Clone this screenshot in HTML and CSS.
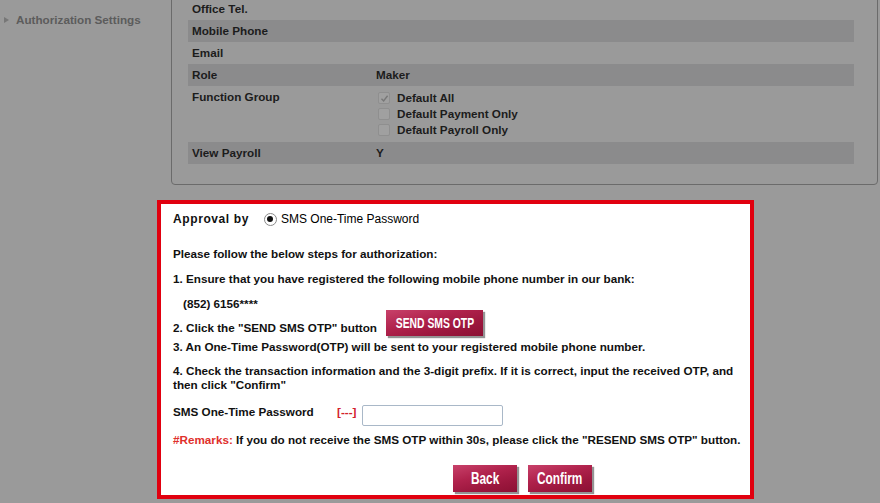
FILE: index.html
```html
<!DOCTYPE html>
<html lang="en">
<head>
<meta charset="utf-8">
<title>Authorization</title>
<link rel="stylesheet" href="styles.css">
</head>
<body>
<div class="page">
  <aside class="sidebar">
    <div class="nav-item"><span class="tri"></span>Authorization Settings</div>
  </aside>
  <main class="main">
    <section class="panel">
      <div class="row"><div class="label">Office Tel.</div><div class="value"></div></div>
      <div class="row alt"><div class="label">Mobile Phone</div><div class="value"></div></div>
      <div class="row"><div class="label">Email</div><div class="value"></div></div>
      <div class="row alt"><div class="label">Role</div><div class="value">Maker</div></div>
      <div class="row fg">
        <div class="label">Function Group</div>
        <div class="value list">
          <div class="opt"><span class="cb"><svg width="9" height="9" viewBox="0 0 9 9"><path d="M1.5 4.8 L3.6 6.9 L7.6 1.8" fill="none" stroke="#777" stroke-width="1.4"/></svg></span>Default All</div>
          <div class="opt"><span class="cb"></span>Default Payment Only</div>
          <div class="opt"><span class="cb"></span>Default Payroll Only</div>
        </div>
      </div>
      <div class="row alt"><div class="label">View Payroll</div><div class="value">Y</div></div>
    </section>

    <section class="approval">
      <div class="approve-by">
        <span class="title">Approval by</span>
        <span class="radio"><span class="dot"></span></span>
        <span class="radio-label">SMS One-Time Password</span>
      </div>
      <div class="intro">Please follow the below steps for authorization:</div>
      <div class="step">1. Ensure that you have registered the following mobile phone number in our bank:</div>
      <div class="phone">(852) 6156****</div>
      <div class="step2">
        <span class="step2-text">2. Click the "SEND SMS OTP" button</span>
        <button class="btn btn-send" type="button"><span>SEND SMS OTP</span></button>
      </div>
      <div class="step3">3. An One-Time Password(OTP) will be sent to your registered mobile phone number.</div>
      <div class="step4">4. Check the transaction information and the 3-digit prefix. If it is correct, input the received OTP, and then click "Confirm"</div>
      <div class="otp-row">
        <span class="otp-label">SMS One-Time Password</span>
        <span class="otp-code">[---]</span>
        <input class="otp-input" type="text">
      </div>
      <div class="remarks"><span class="red">#Remarks:</span> If you do not receive the SMS OTP within 30s, please click the "RESEND SMS OTP" button.</div>
      <div class="actions">
        <button class="btn btn-action" type="button"><span>Back</span></button>
        <button class="btn btn-action" type="button"><span>Confirm</span></button>
      </div>
    </section>
  </main>
</div>
</body>
</html>
```

FILE: styles.css
```css
html, body {
  margin: 0;
  padding: 0;
  background: #9a9a9a;
  height: 100%;
  overflow: hidden;
}
body {
  font-family: "Liberation Sans", Arial, sans-serif;
  font-size: 11.7px;
  font-weight: bold;
  color: #1e1e1e;
}
.page {
  display: flex;
  align-items: flex-start;
}
.sidebar {
  width: 157px;
  flex: none;
}
.nav-item {
  display: flex;
  align-items: center;
  margin-top: 13px;
  padding-left: 4px;
  line-height: 14px;
  color: #5c5c5c;
  white-space: nowrap;
}
.tri {
  width: 0;
  height: 0;
  border-left: 5px solid #777;
  border-top: 3.5px solid transparent;
  border-bottom: 3.5px solid transparent;
  margin-right: 7px;
}
.main {
  flex: 1;
  display: flex;
  flex-direction: column;
}
.panel {
  margin: -30px 2px 0 14px;
  border: 1px solid #6b6b6b;
  border-radius: 0 0 4px 4px;
  padding: 27px 23px 20px 16px;
  background: #9a9a9a;
}
.row {
  display: flex;
  height: 22px;
  line-height: 22px;
  color: #1c1c1c;
}
.row.alt {
  background: #8b8b8c;
}
.label {
  width: 188px;
  padding-left: 4px;
  box-sizing: border-box;
  flex: none;
}
.value {
  flex: 1;
}
.row.fg {
  height: 56px;
}
.list {
  padding: 4px 0;
  line-height: 16px;
}
.opt {
  display: flex;
  align-items: center;
  height: 16px;
}
.cb {
  width: 10px;
  height: 10px;
  border: 1px solid #8f8f8f;
  border-radius: 2px;
  background: #a0a0a0;
  margin: 0 7px 0 2px;
  display: flex;
  align-items: center;
  justify-content: center;
}
.cb svg {
  display: block;
}

/* Approval dialog */
.approval {
  margin-top: 15px;
  width: 597px;
  box-sizing: border-box;
  border: 4px solid #e1000f;
  background: #fff;
  padding: 0 4px 3px 12px;
  color: #111;
}
.approve-by {
  display: flex;
  align-items: center;
  height: 16px;
  margin-top: 7px;
}
.title {
  font-size: 12px;
  letter-spacing: 0.6px;
}
.radio {
  width: 11px;
  height: 11px;
  border: 1px solid #8a8a8a;
  border-radius: 50%;
  background: #fff;
  margin-left: 15px;
  display: flex;
  align-items: center;
  justify-content: center;
}
.dot {
  width: 6px;
  height: 6px;
  border-radius: 50%;
  background: #111;
}
.radio-label {
  margin-left: 4px;
  font-weight: normal;
  font-size: 12px;
  color: #000;
}
.intro {
  margin-top: 19px;
  line-height: 16px;
}
.step {
  margin-top: 9px;
  line-height: 16px;
}
.phone {
  margin-top: 9px;
  line-height: 16px;
  padding-left: 10px;
}
.step2 {
  display: flex;
  align-items: flex-end;
  margin-top: -2px;
}
.step2-text {
  line-height: 16px;
}
.step3 {
  margin-top: 3px;
  line-height: 16px;
}
.step4 {
  margin-top: 9px;
  line-height: 14px;
}
.otp-row {
  display: flex;
  align-items: flex-start;
  margin-top: 13px;
}
.otp-label {
  width: 164px;
  line-height: 14px;
  flex: none;
}
.otp-code {
  width: 25px;
  line-height: 14px;
  color: #d3202b;
  flex: none;
}
.otp-input {
  width: 141px;
  height: 21px;
  box-sizing: border-box;
  border: 1px solid #a9b8c8;
  border-radius: 2px;
  background: #fff;
  margin: 0;
  padding: 0 3px;
}
.remarks {
  margin-top: 7px;
  line-height: 14px;
}
.red {
  color: #e0302c;
}
.actions {
  display: flex;
  gap: 11px;
  margin-top: 18px;
  padding-left: 280px;
}
.btn {
  border: none;
  padding: 0;
  margin: 0;
  color: #fff;
  font-family: "Liberation Sans", Arial, sans-serif;
  font-weight: bold;
  background: linear-gradient(165deg, #c8416a 0%, #b0224c 40%, #9c173e 70%, #8c1033 100%);
  box-shadow: 2px 2px 1px rgba(60, 60, 60, 0.55);
  display: flex;
  align-items: center;
  justify-content: center;
  flex: none;
}
.btn span {
  display: inline-block;
  transform: scaleX(0.74);
  white-space: nowrap;
}
.btn-send {
  width: 97px;
  height: 26px;
  font-size: 14px;
  margin-left: 9px;
}
.btn-action {
  width: 64px;
  height: 27px;
  font-size: 16px;
}
```
